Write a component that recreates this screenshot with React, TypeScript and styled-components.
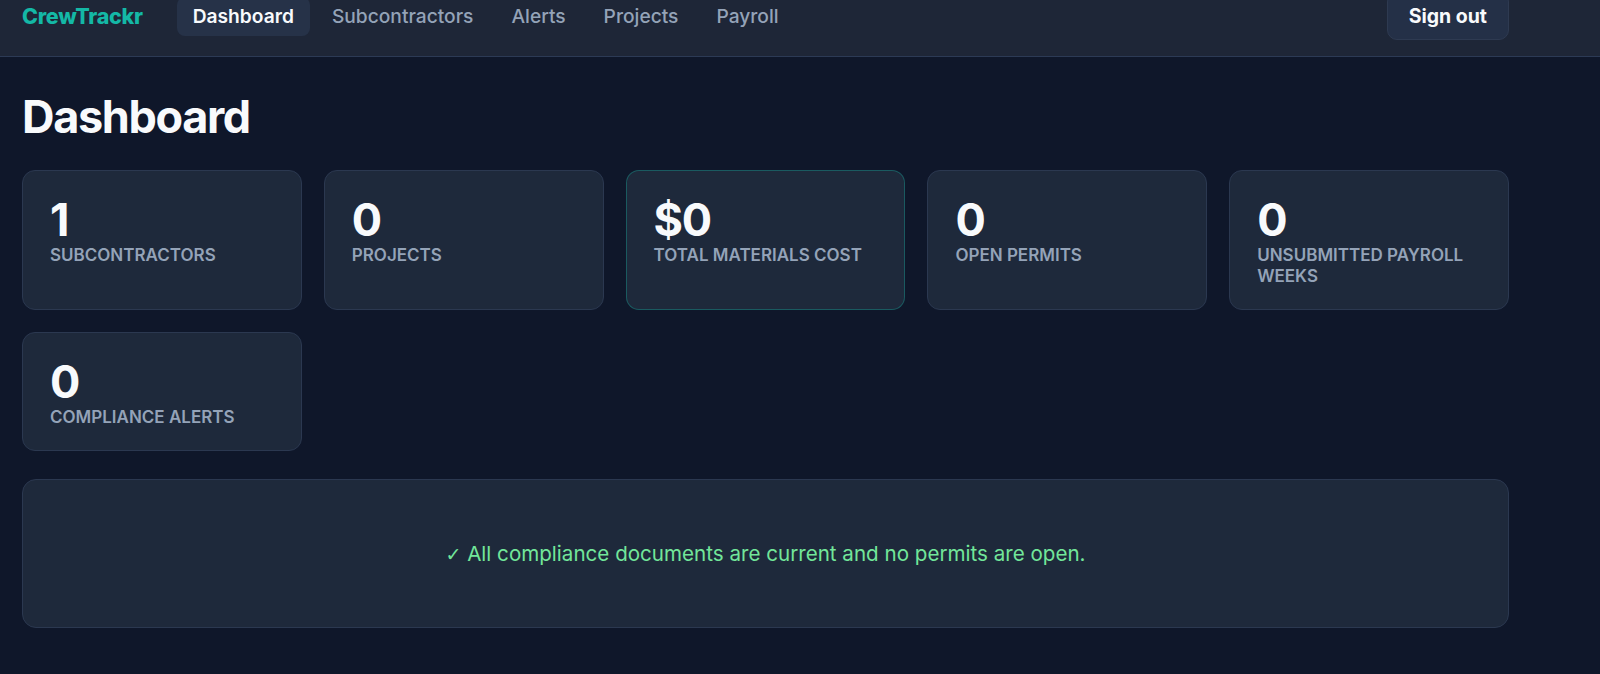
import styled, { createGlobalStyle } from "styled-components";

const GlobalStyle = createGlobalStyle`
  * {
    box-sizing: border-box;
  }

  body {
    margin: 0;
    background: #0f172a;
    color: #f8fafc;
    font-family: Inter, "Noto Sans", "Liberation Sans", sans-serif;
  }
`;

const Page = styled.div`
  min-height: 100vh;
  background: #0f172a;
`;

const NavBar = styled.header`
  height: 57px;
  background: #1e2637;
  border-bottom: 1px solid #2c3a55;
  padding-left: 22px;
`;

const NavInner = styled.nav`
  width: 1487px;
  height: 32px;
  display: flex;
  align-items: center;
`;

const Logo = styled.div`
  font-size: 21.5px;
  font-weight: 800;
  color: #14b8a6;
  letter-spacing: -0.3px;
  margin-right: 34px;
`;

const NavLinks = styled.div`
  display: flex;
  align-items: center;
  gap: 6px;
`;

const NavLink = styled.a<{ $active?: boolean }>`
  padding: 7.5px 16px;
  border-radius: 8px;
  font-size: 19.2px;
  font-weight: ${(p) => (p.$active ? 600 : 500)};
  color: ${(p) => (p.$active ? "#f8fafc" : "#94a3b8")};
  background: ${(p) => (p.$active ? "#263248" : "transparent")};
  text-decoration: none;
  cursor: pointer;
`;

const SignOut = styled.button`
  margin-left: auto;
  height: 48px;
  padding: 0 21px;
  border-radius: 10px;
  border: 1px solid #2e3a51;
  background: #243047;
  color: #f8fafc;
  font-family: inherit;
  font-size: 19.5px;
  font-weight: 700;
  cursor: pointer;
`;

const Main = styled.main`
  width: 1531px;
  padding: 0 22px 40px;
`;

const Title = styled.h1`
  margin: 33px 0 26px;
  font-size: 45px;
  font-weight: 700;
  line-height: 1.2;
  letter-spacing: -0.03em;
  color: #f8fafc;
`;

const StatGrid = styled.div`
  display: grid;
  grid-template-columns: repeat(5, 1fr);
  column-gap: 22px;
  row-gap: 22px;
`;

const StatCard = styled.div<{ $highlight?: boolean }>`
  background: #1e293b;
  border: 1px solid
    ${(p) => (p.$highlight ? "rgba(20, 184, 166, 0.35)" : "#2b3850")};
  border-radius: 13px;
  padding: 22px 27px;
`;

const StatValue = styled.div`
  margin-top: 2px;
  font-size: 45px;
  font-weight: 700;
  line-height: 1.1;
  letter-spacing: -0.03em;
  color: #f8fafc;
`;

const StatLabel = styled.div`
  font-size: 17px;
  line-height: 21.4px;
  font-weight: 600;
  text-transform: uppercase;
  color: #94a3b8;
`;

const StatusPanel = styled.div`
  margin-top: 28px;
  background: #1e293b;
  border: 1px solid #2b3850;
  border-radius: 14px;
  padding: 61px 22px;
  text-align: center;
  font-size: 20.6px;
  color: #72e69a;
`;

const Check = styled.span`
  font-family: "DejaVu Sans", sans-serif;
  font-size: 19px;
`;

const stats = [
  { value: "1", label: "Subcontractors" },
  { value: "0", label: "Projects" },
  { value: "$0", label: "Total Materials Cost", highlight: true },
  { value: "0", label: "Open Permits" },
  { value: "0", label: "Unsubmitted Payroll Weeks" },
  { value: "0", label: "Compliance Alerts" },
];

const links = ["Dashboard", "Subcontractors", "Alerts", "Projects", "Payroll"];

export default function App() {
  return (
    <Page>
      <GlobalStyle />
      <NavBar>
        <NavInner>
          <Logo>CrewTrackr</Logo>
          <NavLinks>
            {links.map((l) => (
              <NavLink key={l} $active={l === "Dashboard"}>
                {l}
              </NavLink>
            ))}
          </NavLinks>
          <SignOut>Sign out</SignOut>
        </NavInner>
      </NavBar>
      <Main>
        <Title>Dashboard</Title>
        <StatGrid>
          {stats.map((s) => (
            <StatCard key={s.label} $highlight={s.highlight}>
              <StatValue>{s.value}</StatValue>
              <StatLabel>{s.label}</StatLabel>
            </StatCard>
          ))}
        </StatGrid>
        <StatusPanel>
          <Check>✓</Check> All compliance documents are current and no permits
          are open.
        </StatusPanel>
      </Main>
    </Page>
  );
}
